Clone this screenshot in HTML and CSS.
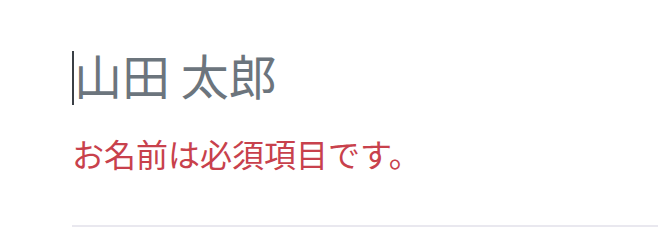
FILE: index.html
```html
<!DOCTYPE html>
<html lang="ja">
<head>
    <meta charset="UTF-8">
    <meta name="viewport" content="width=device-width, initial-scale=1.0">
    <title>お名前</title>
    <link rel="stylesheet" href="styles.css">
</head>
<body>
    <div class="form-field">
        <div class="name-input">
            <span class="caret"></span>
            <span class="placeholder">山田 太郎</span>
        </div>
        <p class="error-text">お名前は必須項目です。</p>
        <div class="divider"></div>
    </div>
</body>
</html>
```

FILE: styles.css
```css
body {
    margin: 0;
    padding: 0;
    background-color: #fff;
    font-family: "Noto Sans CJK JP", "Noto Sans", sans-serif;
}

.form-field {
    padding: 44px 0 0 72px;
}

.name-input {
    position: relative;
    height: 60px;
    display: flex;
    align-items: center;
}

.caret {
    position: absolute;
    left: 0;
    top: 7px;
    width: 2px;
    height: 54px;
    background-color: #3a3f45;
}

.placeholder {
    padding-left: 2px;
    font-size: 48px;
    color: #6c757d;
    line-height: 1;
}

.error-text {
    margin: 29px 0 0 0;
    font-size: 32px;
    line-height: 40px;
    color: #c8414c;
}

.divider {
    margin-top: 52px;
    height: 2px;
    background-color: #e9e8ef;
}
```
